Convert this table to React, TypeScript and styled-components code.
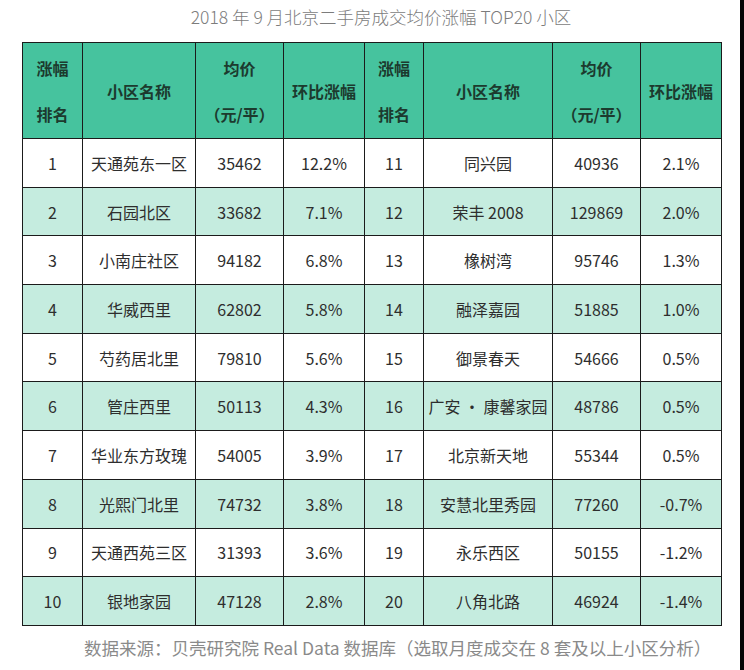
import React from "react";
import styled, { createGlobalStyle } from "styled-components";

const GlobalStyle = createGlobalStyle`
  html, body { margin: 0; padding: 0; background: #ffffff; }
  body { font-family: "Noto Sans CJK SC", "Noto Sans", sans-serif; }
`;

const Page = styled.div`
  display: flex;
  width: 744px;
  height: 670px;
  background: #ffffff;
`;

const Main = styled.div`
  width: 740px;
  display: flex;
  flex-direction: column;
`;

const EdgeStrip = styled.div`
  width: 4px;
  background: #050505;
`;

const Title = styled.div`
  height: 42px;
  line-height: 34px;
  text-align: center;
  font-size: 17.5px;
  color: #7c7c7c;
  font-weight: 300;
  padding-left: 22px;
`;

const Table = styled.table`
  margin-left: 22px;
  width: 700px;
  border-collapse: collapse;
  table-layout: fixed;
  font-size: 16px;
`;

const HeadRow = styled.tr`
  height: 96px;
  background: #46c39e;
`;

const HeadCell = styled.th`
  border: 1px solid #1b1b1b;
  padding: 0;
  font-weight: 700;
  color: #1c3a2e;
  line-height: 46px;
  text-align: center;
  vertical-align: middle;
`;

const BodyRow = styled.tr<{ $alt: boolean }>`
  height: 48.7px;
  background: ${(p) => (p.$alt ? "#c5ecdf" : "#ffffff")};
`;

const Cell = styled.td`
  border: 1px solid #1b1b1b;
  padding: 0;
  text-align: center;
  vertical-align: middle;
  color: #2e2e2e;
  white-space: nowrap;
`;

const Footer = styled.div`
  padding-top: 10px;
  padding-left: 84px;
  font-size: 17.5px;
  line-height: 24px;
  color: #8a8a8a;
  white-space: nowrap;
`;

const widths = [60, 113, 88, 81, 59, 129, 88, 81];

type Item = { rank: number; name: string; price: string; change: string };

const left: Item[] = [
  { rank: 1, name: "天通苑东一区", price: "35462", change: "12.2%" },
  { rank: 2, name: "石园北区", price: "33682", change: "7.1%" },
  { rank: 3, name: "小南庄社区", price: "94182", change: "6.8%" },
  { rank: 4, name: "华威西里", price: "62802", change: "5.8%" },
  { rank: 5, name: "芍药居北里", price: "79810", change: "5.6%" },
  { rank: 6, name: "管庄西里", price: "50113", change: "4.3%" },
  { rank: 7, name: "华业东方玫瑰", price: "54005", change: "3.9%" },
  { rank: 8, name: "光熙门北里", price: "74732", change: "3.8%" },
  { rank: 9, name: "天通西苑三区", price: "31393", change: "3.6%" },
  { rank: 10, name: "银地家园", price: "47128", change: "2.8%" },
];

const right: Item[] = [
  { rank: 11, name: "同兴园", price: "40936", change: "2.1%" },
  { rank: 12, name: "荣丰 2008", price: "129869", change: "2.0%" },
  { rank: 13, name: "橡树湾", price: "95746", change: "1.3%" },
  { rank: 14, name: "融泽嘉园", price: "51885", change: "1.0%" },
  { rank: 15, name: "御景春天", price: "54666", change: "0.5%" },
  { rank: 16, name: "广安 · 康馨家园", price: "48786", change: "0.5%" },
  { rank: 17, name: "北京新天地", price: "55344", change: "0.5%" },
  { rank: 18, name: "安慧北里秀园", price: "77260", change: "-0.7%" },
  { rank: 19, name: "永乐西区", price: "50155", change: "-1.2%" },
  { rank: 20, name: "八角北路", price: "46924", change: "-1.4%" },
];

const HeaderGroup = () => (
  <>
    <HeadCell>
      涨幅
      <br />
      排名
    </HeadCell>
    <HeadCell>小区名称</HeadCell>
    <HeadCell>
      均价
      <br />
      （元/平）
    </HeadCell>
    <HeadCell>环比涨幅</HeadCell>
  </>
);

const DataGroup = ({ item }: { item: Item }) => (
  <>
    <Cell>{item.rank}</Cell>
    <Cell>{item.name}</Cell>
    <Cell>{item.price}</Cell>
    <Cell>{item.change}</Cell>
  </>
);

export default function App() {
  return (
    <>
      <GlobalStyle />
      <Page>
        <Main>
          <Title>2018 年 9 月北京二手房成交均价涨幅 TOP20 小区</Title>
          <Table>
            <colgroup>
              {widths.map((w, i) => (
                <col key={i} style={{ width: w }} />
              ))}
            </colgroup>
            <thead>
              <HeadRow>
                <HeaderGroup />
                <HeaderGroup />
              </HeadRow>
            </thead>
            <tbody>
              {left.map((item, i) => (
                <BodyRow key={item.rank} $alt={i % 2 === 1}>
                  <DataGroup item={item} />
                  <DataGroup item={right[i]} />
                </BodyRow>
              ))}
            </tbody>
          </Table>
          <Footer>数据来源：贝壳研究院 Real Data 数据库（选取月度成交在 8 套及以上小区分析）</Footer>
        </Main>
        <EdgeStrip />
      </Page>
    </>
  );
}
